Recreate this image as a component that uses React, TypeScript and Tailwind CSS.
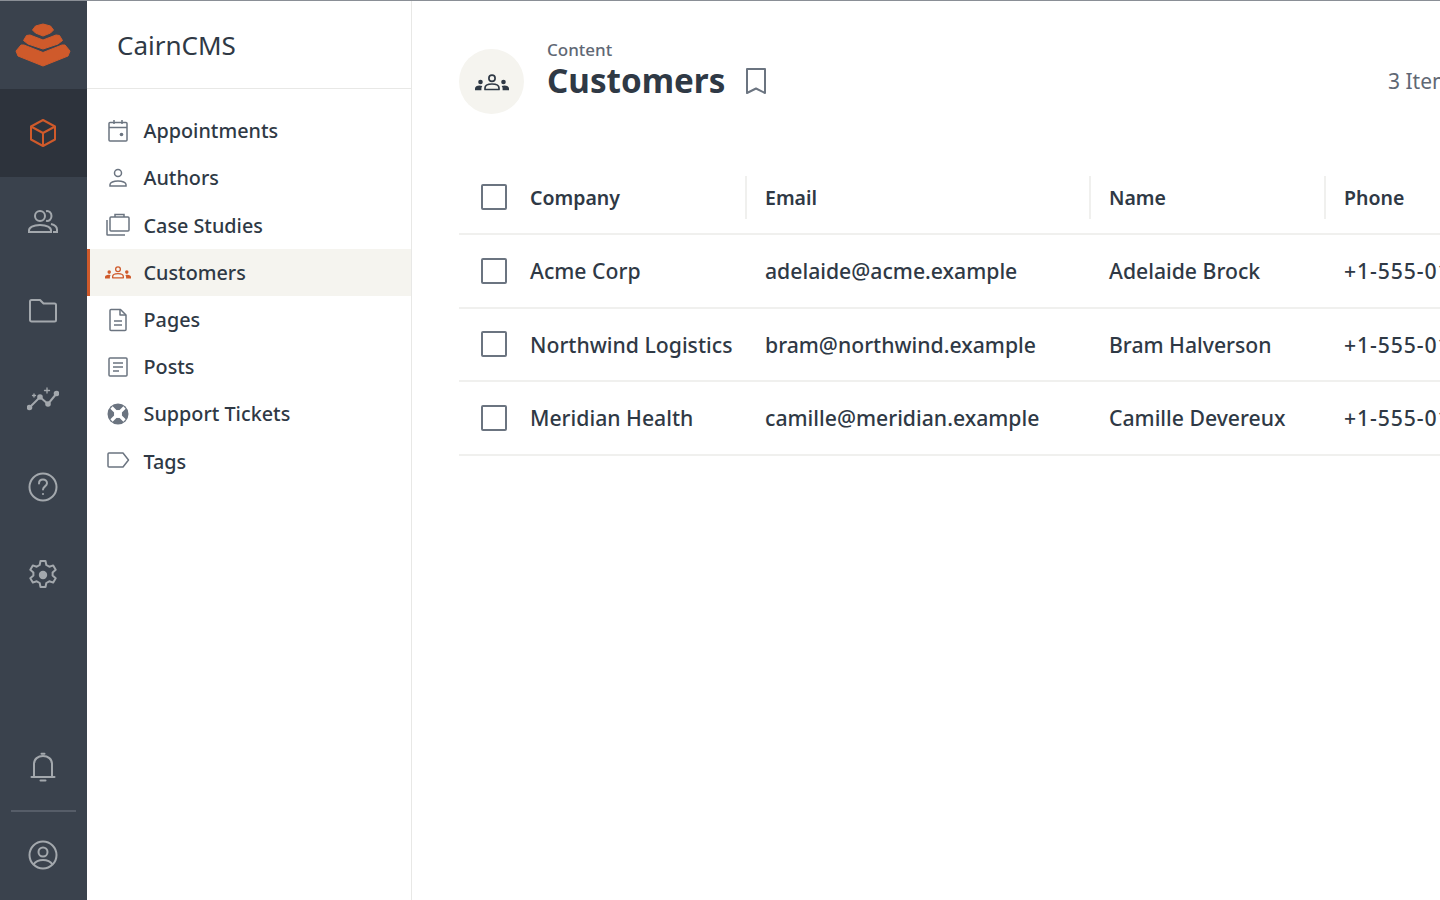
import React from 'react';

const railIcon = 'w-8 h-8 text-[#a3a8ad]';
const navIcon = 'w-6 h-6 text-[#6b7480]';

const CubeIcon = () => (
  <svg viewBox="0 0 32 32" fill="none" stroke="#cf5a2b" strokeWidth="2" strokeLinejoin="round" className="w-8 h-8">
    <path d="M16 3 28 9.500v13L16 29 4 22.500v-13z" />
    <path d="M4 9.500 16 16l12-6.500M16 16v13" />
  </svg>
);

const PeopleIcon = () => (
  <svg viewBox="0 0 32 32" fill="none" stroke="currentColor" strokeWidth="2" className={railIcon}>
    <circle cx="13" cy="10" r="5" />
    <path d="M2 26v-1.500c0-3 4-5.500 11-5.500s11 2.500 11 5.500V26z" />
    <path d="M19 5.200c3.500-.6 5.500 2 5.500 4.800S22.500 15.400 19 14.800M24 18c3.500.8 6 2.800 6 5.500V26h-4" />
  </svg>
);

const FolderIcon = () => (
  <svg viewBox="0 0 32 32" fill="none" stroke="currentColor" strokeWidth="2" strokeLinejoin="round" className={railIcon}>
    <path d="M3 7.500c0-.8.700-1.500 1.500-1.500h8.500l3.500 3.500h11c.8 0 1.500.7 1.500 1.500v15c0 .8-.7 1.500-1.500 1.500h-23c-.8 0-1.500-.7-1.500-1.500z" />
  </svg>
);

const SparkIcon = () => (
  <svg viewBox="0 0 32 32" fill="none" stroke="currentColor" strokeWidth="2" strokeLinecap="round" className={railIcon}>
    <path d="M2 26 13 15l8 7 9-11" />
    <circle cx="2.500" cy="25.500" r="1.800" fill="currentColor" />
    <circle cx="13" cy="15" r="1.800" fill="currentColor" />
    <circle cx="21" cy="22" r="1.800" fill="currentColor" />
    <circle cx="29.500" cy="11.500" r="1.800" fill="currentColor" />
    <path d="M20 6v5M17.500 8.500h5M7 12v3M5.500 13.500h3" strokeWidth="1.300" />
  </svg>
);

const HelpIcon = () => (
  <svg viewBox="0 0 32 32" fill="none" stroke="currentColor" strokeWidth="2" strokeLinecap="round" className={railIcon}>
    <circle cx="16" cy="16" r="13.500" />
    <path d="M12 12.500c0-2.500 1.800-4 4-4s4 1.500 4 3.800c0 3-4 3.200-4 6.200" />
    <circle cx="16" cy="23" r="1.100" fill="currentColor" stroke="none" />
  </svg>
);

const GearIcon = () => (
  <svg viewBox="0 0 32 32" fill="none" stroke="currentColor" strokeWidth="2" strokeLinejoin="round" className={railIcon}>
    <path d="M13.500 2h5l.8 4 3 1.700 3.900-1.300 2.500 4.300-3.100 2.700v3.200l3.100 2.700-2.500 4.300-3.900-1.300-3 1.700-.8 4h-5l-.8-4-3-1.700-3.900 1.300-2.500-4.300 3.100-2.700v-3.200l-3.100-2.700 2.500-4.300 3.900 1.300 3-1.700z" />
    <circle cx="16" cy="16" r="4.200" fill="currentColor" stroke="none" />
  </svg>
);

const BellIcon = () => (
  <svg viewBox="0 0 32 32" fill="none" stroke="currentColor" strokeWidth="2" strokeLinecap="round" className={railIcon}>
    <path d="M7 25V12c0-5 4-8 9-8s9 3 9 8v13" />
    <path d="M4.500 25h23" />
    <path d="M14.500 1.800h3M13.500 28.500h5" />
  </svg>
);

const UserCircleIcon = () => (
  <svg viewBox="0 0 32 32" fill="none" stroke="currentColor" strokeWidth="2" className={railIcon}>
    <circle cx="16" cy="16" r="13.500" />
    <circle cx="16" cy="13" r="4.500" />
    <path d="M6.500 25.500c2-3 5.500-4.500 9.500-4.500s7.500 1.500 9.500 4.500" />
  </svg>
);

const CalendarIcon = () => (
  <svg viewBox="0 0 24 24" fill="none" stroke="currentColor" strokeWidth="1.500" className={navIcon}>
    <rect x="3" y="3.500" width="18" height="18.500" rx="1" />
    <path d="M3 8.500h18M8 1v4M16 1v4" />
    <circle cx="15.500" cy="15.500" r="1.800" fill="currentColor" stroke="none" />
  </svg>
);

const PersonIcon = () => (
  <svg viewBox="0 0 24 24" fill="none" stroke="currentColor" strokeWidth="1.500" className={navIcon}>
    <circle cx="12" cy="7" r="3.500" />
    <path d="M4 20v-1.500c0-2 3.500-3.500 8-3.500s8 1.500 8 3.500V20z" />
  </svg>
);

const CaseIcon = () => (
  <svg viewBox="0 0 24 24" fill="none" stroke="currentColor" strokeWidth="1.500" className={navIcon}>
    <rect x="4" y="4" width="19" height="14" rx="1" />
    <path d="M9 4V1.500h9V4M1 7v14.500c0 .3.200.5.500.5H19" />
  </svg>
);

// flat group mark: one outlined figure between two solid ones
const GroupIcon = ({ className }: { className: string }) => (
  <svg viewBox="0 0 34 17" fill="none" className={className}>
    <circle cx="17" cy="4.300" r="3.100" stroke="currentColor" strokeWidth="1.700" />
    <path d="M10 15.500v-1.500c0-2.500 3-4 7-4s7 1.500 7 4v1.500z" stroke="currentColor" strokeWidth="1.700" strokeLinejoin="round" />
    <circle cx="5.500" cy="8" r="2.300" fill="currentColor" />
    <circle cx="28.500" cy="8" r="2.300" fill="currentColor" />
    <path d="M0 16.300v-1.800c0-1.800 2-3 4.500-3 1 0 2 .2 2.800.5-.6.800-.9 1.500-.9 2.500v1.800zM34 16.300v-1.800c0-1.800-2-3-4.500-3-1 0-2 .2-2.800.5.600.8.900 1.500.9 2.500v1.800z" fill="currentColor" />
  </svg>
);

const PageIcon = () => (
  <svg viewBox="0 0 24 24" fill="none" stroke="currentColor" strokeWidth="1.500" strokeLinejoin="round" className={navIcon}>
    <path d="M4 2.500c0-.6.400-1 1-1h9.500L20 7v14.500c0 .6-.4 1-1 1H5c-.6 0-1-.4-1-1z" />
    <path d="M14 1.500V7h6M8 13h8M8 17h8" />
  </svg>
);

const PostIcon = () => (
  <svg viewBox="0 0 24 24" fill="none" stroke="currentColor" strokeWidth="1.500" className={navIcon}>
    <rect x="3" y="3" width="18" height="18" rx="1" />
    <path d="M7 8h10M7 12h10M7 16h6" />
  </svg>
);

const LifebuoyIcon = () => (
  <svg viewBox="0 0 24 24" fill="none" className={navIcon}>
    <circle cx="12" cy="12" r="10.500" fill="currentColor" />
    <path d="M12 12 5.500 5.500M12 12l6.500 6.500M12 12l6.500-6.500M12 12l-6.500 6.500" stroke="#fff" strokeWidth="3.200" />
    <circle cx="12" cy="12" r="4" fill="#fff" />
  </svg>
);

const TagIcon = () => (
  <svg viewBox="0 0 24 24" fill="none" stroke="currentColor" strokeWidth="1.500" strokeLinejoin="round" className={navIcon}>
    <path d="M2 5c0-.6.400-1 1-1h14l5.500 7-5.500 7H3c-.6 0-1-.4-1-1z" />
  </svg>
);

const railTop = [<PeopleIcon />, <FolderIcon />, <SparkIcon />, <HelpIcon />, <GearIcon />];

const navItems = [
  { label: 'Appointments', icon: <CalendarIcon /> },
  { label: 'Authors', icon: <PersonIcon /> },
  { label: 'Case Studies', icon: <CaseIcon /> },
  { label: 'Customers', icon: <GroupIcon className="w-[26px] h-[13px] mx-[-1px] text-[#cf5a2b]" />, active: true },
  { label: 'Pages', icon: <PageIcon /> },
  { label: 'Posts', icon: <PostIcon /> },
  { label: 'Support Tickets', icon: <LifebuoyIcon /> },
  { label: 'Tags', icon: <TagIcon /> },
];

const customers = [
  { company: 'Acme Corp', email: 'adelaide@acme.example', name: 'Adelaide Brock', phone: '+1-555-0101' },
  { company: 'Northwind Logistics', email: 'bram@northwind.example', name: 'Bram Halverson', phone: '+1-555-0102' },
  { company: 'Meridian Health', email: 'camille@meridian.example', name: 'Camille Devereux', phone: '+1-555-0103' },
];

const Checkbox = () => (
  <span className="block w-[26px] h-[26px] rounded-[2px] border-2 border-[#6b7480] bg-white" />
);

export default function App() {
  return (
    <div className="flex w-[1440px] h-[900px] overflow-hidden bg-white text-[#2f3945] font-['Noto_Sans','Liberation_Sans',sans-serif] border-t border-[#8a8f96]">
      {/* icon rail */}
      <aside className="flex flex-col w-[87px] shrink-0 bg-[#3a424d]">
        <div className="flex items-center justify-center h-[88px] pr-[1px]">
          <svg viewBox="15 26 56 44" className="w-14 h-11" fill="#cf5a2b" stroke="#cf5a2b" strokeLinejoin="round">
            <path d="M32.500 33 35.500 29 43 27 50.500 29 53.500 33 50.500 36 43 39 35.500 36z" />
            <path d="M23.500 43.500 26.500 38.500 30 38 43 43 56 38 59.500 38.500 62.500 43.500 58 47 43 52 28 47z" />
            <path d="M16 54 21 48 24 48 43 55.500 62 48 65 48 70 54 68 59 43 69 18 59z" />
          </svg>
        </div>
        <div className="flex items-center justify-center h-[88px] pr-[1px] bg-[#2d333c]">
          <CubeIcon />
        </div>
        {railTop.map((icon, i) => (
          <div key={i} className="flex items-center justify-center h-[88.400px] pt-[1px] pr-[1px]">
            {icon}
          </div>
        ))}
        <div className="mt-auto flex items-center justify-center h-[88px] pt-[3px] pr-[1px]">
          <BellIcon />
        </div>
        <div className="mx-[11px] h-[2px] bg-[#565d68]" />
        <div className="flex items-center justify-center h-[88px] pb-[2px] pr-[1px]">
          <UserCircleIcon />
        </div>
      </aside>

      {/* section sidebar */}
      <nav className="w-[325px] shrink-0 border-r border-[#e8e8e6]">
        <div className="flex items-center h-[88px] pl-[30px] pt-[1px] border-b border-[#e8e8e6] text-[26px] text-[#2f3945]">
          CairnCMS
        </div>
        <ul className="pt-[18px]">
          {navItems.map((item) => (
            <li
              key={item.label}
              className={`flex items-center gap-[13.500px] h-[47.200px] pl-[16px] pt-[1px] text-[19.800px] font-medium border-l-[3px] ${
                item.active ? 'bg-[#f5f4ef] border-[#cf5a2b]' : 'border-transparent'
              }`}
            >
              {item.icon}
              <span>{item.label}</span>
            </li>
          ))}
        </ul>
      </nav>

      {/* content */}
      <main className="flex-1 min-w-0 pl-[47px]">
        <header className="flex items-start h-[160px] pt-[39px]">
          <div className="flex items-center justify-center w-[65px] h-[65px] rounded-full bg-[#f5f4ef] mt-[9px]">
            <GroupIcon className="w-[34px] h-[17px] mt-[1px] text-[#2f3945]" />
          </div>
          <div className="ml-[23px]">
            <div className="text-[17px] leading-[20px] font-medium text-[#5f6874]">Content</div>
            <div className="flex items-center gap-[19px] mt-[1px]">
              <h1 className="text-[33.200px] leading-[40px] font-bold">Customers</h1>
              <svg viewBox="0 0 24 28" fill="none" stroke="#6b7480" strokeWidth="2" strokeLinejoin="round" className="w-6 h-7">
                <path d="M3 2h18v24l-9-4.500L3 26z" />
              </svg>
            </div>
          </div>
          <div className="ml-auto mt-[26px] shrink-0 w-[52px] overflow-hidden whitespace-nowrap text-[21px] text-[#5f6874]">
            3 Items
          </div>
        </header>

        <table className="table-fixed border-collapse w-[1100px] mt-[15px] text-[21.200px] font-medium">
          <colgroup>
            <col className="w-[51px]" />
            <col className="w-[235px]" />
            <col className="w-[344px]" />
            <col className="w-[235px]" />
            <col />
          </colgroup>
          <thead>
            <tr className="h-[58px] border-b-2 border-[#f0f0ee] text-[19.500px]">
              <th className="pl-[22px] align-top pt-[8px] font-normal">
                <Checkbox />
              </th>
              <th className="pl-[20px] align-top text-left font-semibold">
                <div className="flex items-center h-[43px]">Company</div>
              </th>
              {['Email', 'Name', 'Phone'].map((h) => (
                <th key={h} className="align-top text-left font-semibold">
                  <div className="flex items-center h-[43px] pl-[18px] border-l-2 border-[#f0f0ee]">{h}</div>
                </th>
              ))}
            </tr>
          </thead>
          <tbody>
            {customers.map((c) => (
              <tr key={c.email} className="h-[73.500px] border-b-2 border-[#f0f0ee]">
                <td className="pl-[22px]">
                  <Checkbox />
                </td>
                <td className="pl-[20px] pt-[1px] whitespace-nowrap">{c.company}</td>
                <td className="pl-[20px] pt-[1px] whitespace-nowrap">{c.email}</td>
                <td className="pl-[20px] pt-[1px] whitespace-nowrap">{c.name}</td>
                <td className="pl-[20px] pt-[1px] whitespace-nowrap tracking-[0.9px]">{c.phone}</td>
              </tr>
            ))}
          </tbody>
        </table>
      </main>
    </div>
  );
}
